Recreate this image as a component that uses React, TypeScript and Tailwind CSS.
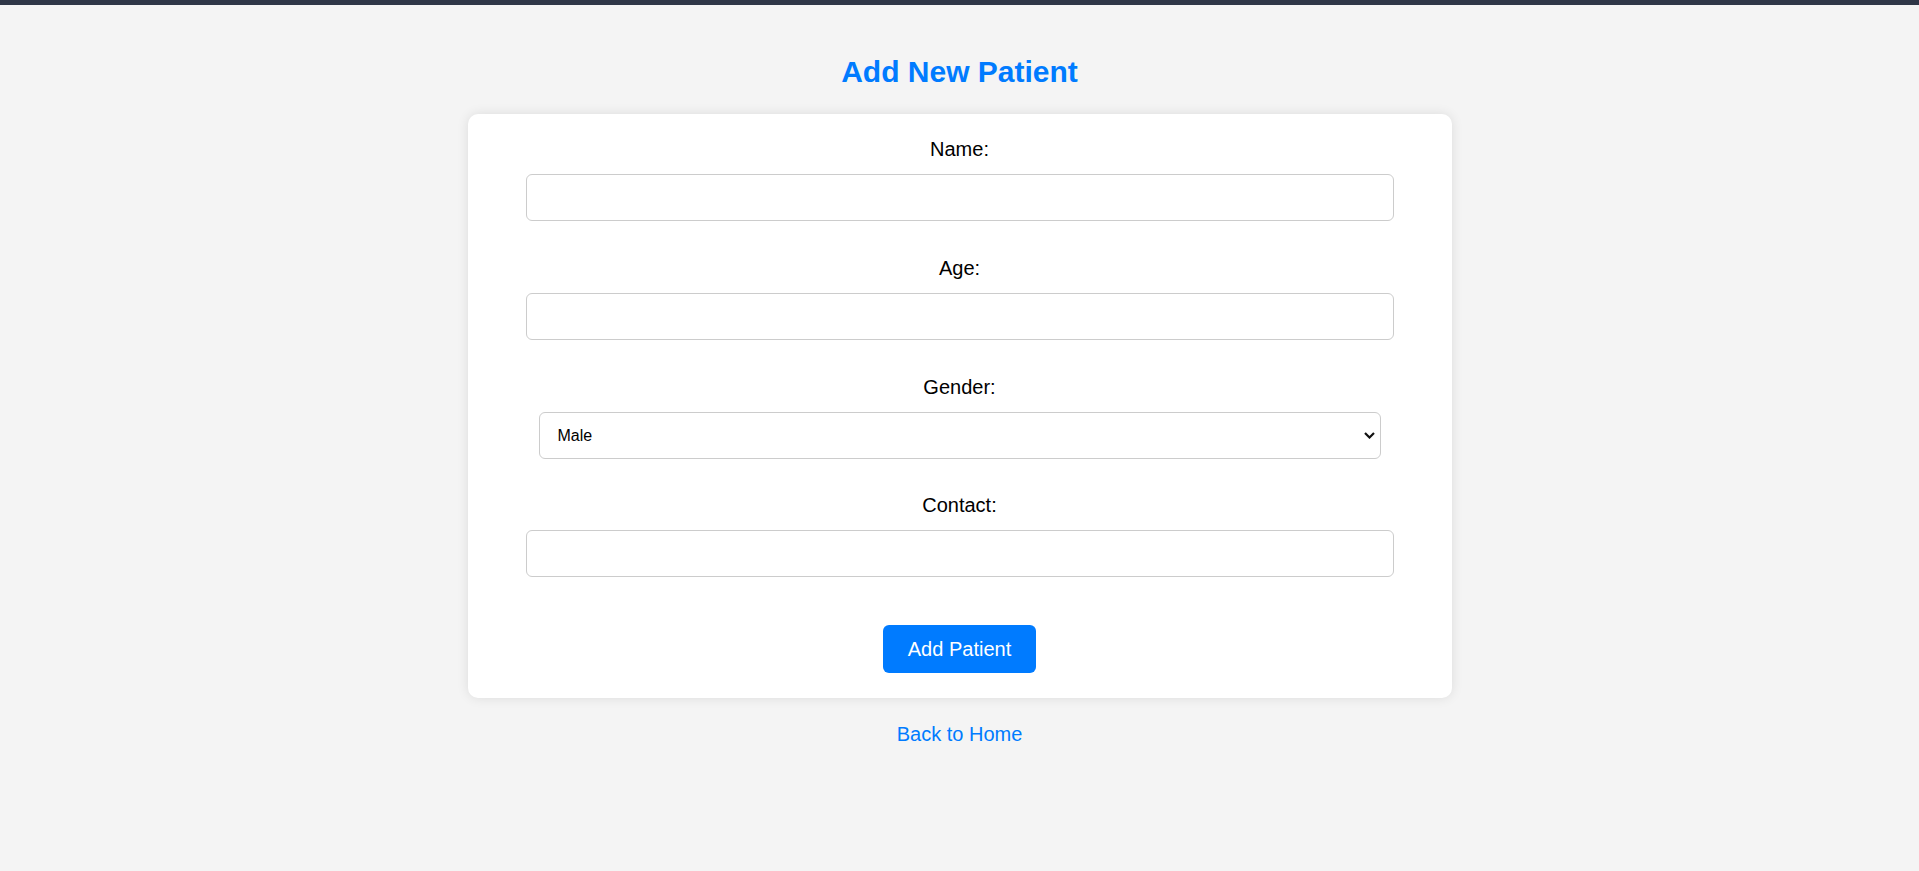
import { useState } from "react";

const font = "font-['Liberation_Sans',Arial,sans-serif]";

function Field({ label, children, last }: { label: string; children: React.ReactNode; last?: boolean }) {
  return (
    <div className={`flex flex-col items-center ${last ? "" : "mb-[36px]"}`}>
      <label className="text-[20px] leading-[23px] text-black">{label}</label>
      <div className="mt-[13px]">{children}</div>
    </div>
  );
}

export default function App() {
  const [name, setName] = useState("");
  const [age, setAge] = useState("");
  const [gender, setGender] = useState("Male");
  const [contact, setContact] = useState("");

  const input =
    "block h-[47px] w-[868px] rounded-[6px] border border-[#cccccc] bg-white px-[12px] text-[16px] text-black outline-none";

  return (
    <div className={`min-h-screen border-t-[5px] border-[#2f3747] bg-[#f4f4f4] ${font}`}>
      <h1 className="pt-[49px] text-center text-[30px] font-bold leading-[35px] text-[#007bff]">Add New Patient</h1>

      <form
        className="mx-auto mt-[25px] flex w-[984px] flex-col items-center rounded-[10px] bg-white pt-[24px] pb-[25px] shadow-[0_0_12px_rgba(0,0,0,0.1)]"
        onSubmit={(e) => e.preventDefault()}
      >
        <Field label="Name:">
          <input className={input} value={name} onChange={(e) => setName(e.target.value)} />
        </Field>
        <Field label="Age:">
          <input className={input} value={age} onChange={(e) => setAge(e.target.value)} />
        </Field>
        <div className="mb-[35px] flex flex-col items-center">
          <label className="text-[20px] leading-[23px] text-black">Gender:</label>
          <div className="relative mt-[13px]">
            <select
              className="block h-[47px] w-[842px] appearance-none rounded-[6px] border border-[#cccccc] bg-white pl-[18px] text-[16px] text-black outline-none"
              value={gender}
              onChange={(e) => setGender(e.target.value)}
            >
              <option>Male</option>
              <option>Female</option>
              <option>Other</option>
            </select>
            <svg
              className="pointer-events-none absolute right-[6px] top-[20px]"
              width="11"
              height="7"
              viewBox="0 0 11 7"
              fill="none"
            >
              <polyline points="1,1 5.5,5.5 10,1" stroke="#111" strokeWidth="2.2" />
            </svg>
          </div>
        </div>
        <Field label="Contact:" last>
          <input className={input} value={contact} onChange={(e) => setContact(e.target.value)} />
        </Field>

        <button
          type="submit"
          className="mt-[48px] h-[48px] rounded-[6px] bg-[#007bff] px-[25px] text-[20px] leading-[23px] text-white"
        >
          Add Patient
        </button>
      </form>

      <div className="mt-[25px] text-center">
        <a href="#" className="text-[20px] leading-[23px] text-[#007bff]">
          Back to Home
        </a>
      </div>
    </div>
  );
}
